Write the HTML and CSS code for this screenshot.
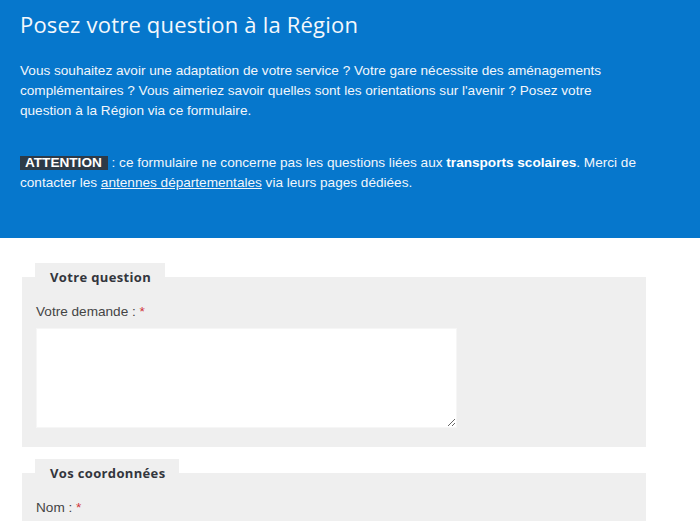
FILE: index.html
```html
<!DOCTYPE html>
<html lang="fr">
<head>
<meta charset="utf-8">
<link rel="stylesheet" href="styles.css">
</head>
<body>
<header class="intro">
  <h1 class="intro-title">Posez votre question à la Région</h1>
  <p class="intro-text">Vous souhaitez avoir une adaptation de votre service ? Votre gare nécessite des aménagements complémentaires ? Vous aimeriez savoir quelles sont les orientations sur l'avenir ? Posez votre question à la Région via ce formulaire.</p>
  <p class="intro-text"><span class="badge">ATTENTION</span> : ce formulaire ne concerne pas les questions liées aux <strong>transports scolaires</strong>. Merci de contacter les <a href="#" class="link">antennes départementales</a> via leurs pages dédiées.</p>
</header>
<form class="form">
  <fieldset class="group">
    <legend class="group-title">Votre question</legend>
    <label class="field-label">Votre demande : <span class="req">*</span></label>
    <textarea class="field-area"></textarea>
  </fieldset>
  <fieldset class="group">
    <legend class="group-title">Vos coordonnées</legend>
    <label class="field-label">Nom : <span class="req">*</span></label>
  </fieldset>
</form>
</body>
</html>
```
FILE: styles.css
```css
html, body {
  margin: 0;
  padding: 0;
  background: #ffffff;
}
body {
  font-family: "Liberation Sans", Arial, sans-serif;
  font-size: 13.6px;
  color: #444;
}
.intro {
  box-sizing: border-box;
  background: #0677cc;
  color: #f2f6fb;
  padding: 9px 58px 0 20px;
  height: 238px;
}
.intro-title {
  margin: 0 0 22px;
  font-family: "Open Sans", sans-serif;
  font-weight: 400;
  font-size: 22px;
  line-height: 30px;
  letter-spacing: 0.2px;
  color: #f4f8fc;
}
.intro-text {
  margin: 0 0 32px;
  line-height: 20px;
}
.intro-text strong {
  color: #ffffff;
}
.badge {
  display: inline-block;
  background: #2d3a47;
  color: #fff;
  font-weight: bold;
  padding: 0 6px 0 5px;
  line-height: 14px;
}
.link {
  color: #f2f6fb;
  text-decoration: underline;
}
.form {
  padding: 25px 54px 0 22px;
}
.group {
  margin: 0 0 12px;
  border: 0;
  background: #efefef;
  padding: 13px 14px 19px;
  min-width: 0;
}
.group-title {
  background: #efefef;
  padding: 0 14px 0 15px;
  margin-left: -1px;
  font-family: "Open Sans", sans-serif;
  font-weight: 700;
  font-size: 13px;
  letter-spacing: 0.35px;
  color: #33363d;
  height: 28px;
  line-height: 28px;
}
.field-label {
  display: block;
  line-height: 16px;
  margin-bottom: 8px;
}
.req {
  color: #d0343a;
}
.field-area {
  display: block;
  width: 421px;
  height: 100px;
  box-sizing: border-box;
  border: 1px solid #f6f6f6;
  background: #fff;
}
```
